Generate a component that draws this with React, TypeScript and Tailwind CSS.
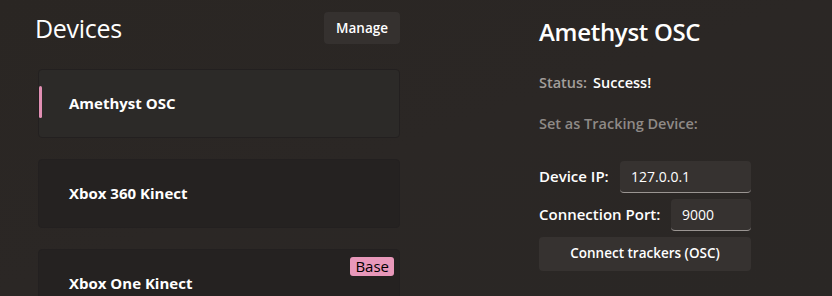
import { useState } from "react";

const devices = [
  { name: "Amethyst OSC", base: false },
  { name: "Xbox 360 Kinect", base: false },
  { name: "Xbox One Kinect", base: true },
];

export default function App() {
  const [selected, setSelected] = useState("Amethyst OSC");
  const [ip, setIp] = useState("127.0.0.1");
  const [port, setPort] = useState("9000");

  return (
    <div
      className="flex h-[296px] w-[832px] overflow-hidden bg-gradient-to-br from-[#2a2623] via-[#2b2725] to-[#2a2725] text-white"
      style={{ fontFamily: '"Open Sans", "Noto Sans", sans-serif' }}
    >
      {/* device list */}
      <div className="w-[400px] shrink-0 pl-[35px] pt-[12px]">
        <div className="flex h-[32px] items-center justify-between">
          <h1 className="text-[25px] leading-none tracking-[-0.3px]">Devices</h1>
          <button className="h-[32px] rounded-[4px] bg-[#35312f] px-[12px] text-[13.5px] font-semibold">
            Manage
          </button>
        </div>

        <div className="ml-[3px] mt-[25px] flex flex-col gap-[21px]">
          {devices.map((d) => (
            <DeviceCard
              key={d.name}
              name={d.name}
              base={d.base}
              active={selected === d.name}
              onClick={() => setSelected(d.name)}
            />
          ))}
        </div>
      </div>

      {/* details */}
      <div className="ml-[139px] pt-[16px] text-[14px]">
        <h2 className="text-[24px] font-semibold leading-[32px] tracking-[-0.3px]">{selected}</h2>

        <div className="mt-[24px] flex gap-[6px] text-[14.5px] font-semibold">
          <span className="text-[#a39e9b]">Status:</span>
          <span>Success!</span>
        </div>
        <div className="mt-[19px] text-[14.5px] font-semibold text-[#8f8a87]">Set as Tracking Device:</div>

        <div className="mt-[26px] flex w-[212px] flex-col gap-[6px]">
          <div className="flex items-center justify-between">
            <span className="text-[15px] font-semibold">Device IP:</span>
            <Field value={ip} onChange={setIp} width="w-[131px]" />
          </div>
          <div className="flex items-center justify-between">
            <span className="text-[15px] font-semibold">Connection Port:</span>
            <Field value={port} onChange={setPort} width="w-[80px]" />
          </div>
          <button className="h-[34px] w-full rounded-[4px] bg-[#363230] text-[13.5px] font-semibold">
            Connect trackers (OSC)
          </button>
        </div>
      </div>
    </div>
  );
}

function DeviceCard({
  name,
  base,
  active,
  onClick,
}: {
  name: string;
  base: boolean;
  active: boolean;
  onClick: () => void;
}) {
  return (
    <div
      onClick={onClick}
      className={`relative flex h-[69px] w-[362px] items-center rounded-[4px] border border-[#232020] pl-[30px] ${
        active ? "bg-[#2c2a28]" : "bg-[#252221]"
      }`}
    >
      {active && (
        <span className="absolute left-0 top-[16px] h-[32px] w-[3px] rounded-full bg-[#e18fb3]" />
      )}
      {base && (
        <span className="absolute right-[5px] top-[7px] rounded-[3px] bg-[#e898ba] px-[5px] text-[15px] leading-[19px] text-black">
          Base
        </span>
      )}
      <span className="text-[15px] font-bold">{name}</span>
    </div>
  );
}

function Field({
  value,
  onChange,
  width,
}: {
  value: string;
  onChange: (v: string) => void;
  width: string;
}) {
  return (
    <input
      value={value}
      onChange={(e) => onChange(e.target.value)}
      className={`${width} h-[32px] rounded-[4px] border-b border-[#9a9592] bg-[#363230] px-[11px] text-[14px] outline-none`}
    />
  );
}
